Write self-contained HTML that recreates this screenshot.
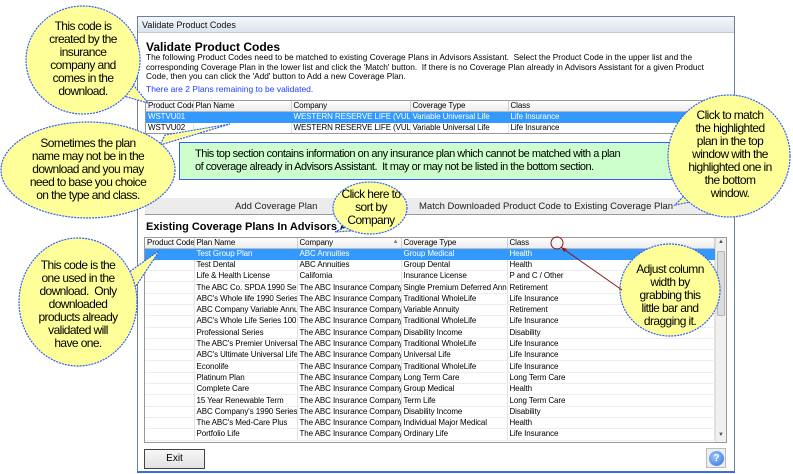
<!DOCTYPE html>
<html><head><meta charset="utf-8"><style>
*{margin:0;padding:0;box-sizing:border-box}
body{width:793px;height:474px;background:#fff;position:relative;overflow:hidden;font-family:"Liberation Sans",sans-serif;color:#000}
.a{position:absolute}
.win{left:137px;top:16px;width:598px;height:457px;border:1px solid #6f7f95;border-bottom:2px solid #3a6fd6;background:#fff}
.title{left:0;top:0;width:596px;height:16px;background:linear-gradient(#f4f7fb,#dbe4ef);border-bottom:1px solid #c0c8d4;font-size:9px;line-height:16px;padding-left:4px;color:#111}
.t{font-size:8.5px;white-space:nowrap;line-height:11px}
table{border-collapse:collapse;table-layout:fixed;font-size:8px;letter-spacing:-0.1px}
td{height:11.3px;line-height:10px;padding:0 2px;white-space:nowrap;overflow:hidden;border-right:1px solid #e3e3e3;border-bottom:1px solid #eee}
th{font-weight:normal;text-align:left;padding:0 2px;height:10px;line-height:9px;background:linear-gradient(#fff,#ececec);border-right:1px solid #cfcfcf;border-bottom:1px solid #bbb;white-space:nowrap;overflow:hidden}
tr.sel td{background:#3399ff;color:#fff;border-color:#3399ff}
.c{font-size:12px;line-height:13px;text-align:center;position:absolute;letter-spacing:-0.6px}
</style></head><body>
<div class="a win">
 <div class="a title">Validate Product Codes</div>
</div>
<div class="a" style="left:146px;top:40px;font-size:12px;font-weight:bold">Validate Product Codes</div>
<div class="a t" style="left:146px;top:53px;line-height:9.5px;font-size:8.3px">The following Product Codes need to be matched to existing Coverage Plans in Advisors Assistant.&nbsp; Select the Product Code in the upper list and the<br>corresponding Coverage Plan in the lower list and click the 'Match' button.&nbsp; If there is no Coverage Plan already in Advisors Assistant for a given Product<br>Code, then you can click the 'Add' button to Add a new Coverage Plan.</div>
<div class="a t" style="left:146px;top:84px;color:#1f3fff">There are 2 Plans remaining to be validated.</div>
<div class="a" style="left:145px;top:100px;width:582px;height:34px;border:1px solid #999;overflow:hidden">
<table style="width:580px"><colgroup><col style="width:47px"><col style="width:98px"><col style="width:119px"><col style="width:98px"><col></colgroup>
<tr><th>Product Code</th><th>Plan Name</th><th>Company</th><th>Coverage Type</th><th>Class</th></tr>
<tr class="sel"><td>WSTVU01</td><td></td><td>WESTERN RESERVE LIFE (VUL)</td><td>Variable Universal Life</td><td>Life Insurance</td></tr>
<tr><td>WSTVU02</td><td></td><td>WESTERN RESERVE LIFE (VUL)</td><td>Variable Universal Life</td><td>Life Insurance</td></tr>
</table></div>
<div class="a" style="left:179px;top:142px;width:520px;height:38px;background:#ccffcc;border:1px solid #2f5fff;font-size:11px;line-height:13px;padding:5px 0 0 15px;white-space:nowrap;letter-spacing:-0.5px">This top section contains information on any insurance plan which cannot be matched with a plan<br>of coverage already in Advisors Assistant.&nbsp; It may or may not be listed in the bottom section.</div>
<div class="a" style="left:145px;top:198px;width:583px;height:17px;background:#ececec;border-bottom:1px solid #999"></div>
<div class="a" style="left:235px;top:201px;font-size:9.5px;color:#222">Add Coverage Plan</div>
<div class="a" style="left:419px;top:201px;font-size:9.5px;color:#222;white-space:nowrap">Match Downloaded Product Code to Existing Coverage Plan</div>
<div class="a" style="left:146px;top:221px;font-size:11px;font-weight:bold;white-space:nowrap">Existing Coverage Plans In Advisors Assistant</div>
<div class="a" style="left:144px;top:237px;width:583px;height:206px;border:1px solid #999;overflow:hidden">
<table style="width:570px"><colgroup><col style="width:49px"><col style="width:103px"><col style="width:104px"><col style="width:106px"><col></colgroup>
<tr><th>Product Code</th><th>Plan Name</th><th>Company <span style="float:right;font-size:6px;color:#777">▲</span></th><th>Coverage Type</th><th>Class</th></tr>
<tr class="sel"><td></td><td>Test Group Plan</td><td>ABC Annuities</td><td>Group Medical</td><td>Health</td></tr>
<tr><td></td><td>Test Dental</td><td>ABC Annuities</td><td>Group Dental</td><td>Health</td></tr>
<tr><td></td><td>Life &amp; Health License</td><td>California</td><td>Insurance License</td><td>P and C / Other</td></tr>
<tr><td></td><td>The ABC Co. SPDA 1990 Series</td><td>The ABC Insurance Company</td><td>Single Premium Deferred Annuity</td><td>Retirement</td></tr>
<tr><td></td><td>ABC's Whole life 1990 Series</td><td>The ABC Insurance Company</td><td>Traditional WholeLife</td><td>Life Insurance</td></tr>
<tr><td></td><td>ABC Company Variable Annuity</td><td>The ABC Insurance Company</td><td>Variable Annuity</td><td>Retirement</td></tr>
<tr><td></td><td>ABC's Whole Life Series 100</td><td>The ABC Insurance Company</td><td>Traditional WholeLife</td><td>Life Insurance</td></tr>
<tr><td></td><td>Professional Series</td><td>The ABC Insurance Company</td><td>Disability Income</td><td>Disability</td></tr>
<tr><td></td><td>The ABC's Premier Universal Life</td><td>The ABC Insurance Company</td><td>Traditional WholeLife</td><td>Life Insurance</td></tr>
<tr><td></td><td>ABC's Ultimate Universal Life</td><td>The ABC Insurance Company</td><td>Universal Life</td><td>Life Insurance</td></tr>
<tr><td></td><td>Econolife</td><td>The ABC Insurance Company</td><td>Traditional WholeLife</td><td>Life Insurance</td></tr>
<tr><td></td><td>Platinum Plan</td><td>The ABC Insurance Company</td><td>Long Term Care</td><td>Long Term Care</td></tr>
<tr><td></td><td>Complete Care</td><td>The ABC Insurance Company</td><td>Group Medical</td><td>Health</td></tr>
<tr><td></td><td>15 Year Renewable Term</td><td>The ABC Insurance Company</td><td>Term Life</td><td>Long Term Care</td></tr>
<tr><td></td><td>ABC Company's 1990 Series Disability</td><td>The ABC Insurance Company</td><td>Disability Income</td><td>Disability</td></tr>
<tr><td></td><td>The ABC's Med-Care Plus</td><td>The ABC Insurance Company</td><td>Individual Major Medical</td><td>Health</td></tr>
<tr><td></td><td>Portfolio Life</td><td>The ABC Insurance Company</td><td>Ordinary Life</td><td>Life Insurance</td></tr>
</table>
<div class="a" style="left:570px;top:0;width:11px;height:204px;background:#f0f0f0;border-left:1px solid #ddd"><div class="a" style="left:1px;top:13px;width:8px;height:65px;background:#dcdcdc;border:1px solid #b5b5b5;border-radius:2px"></div><div class="a" style="left:2px;top:1px;font-size:6px;color:#555">▲</div><div class="a" style="left:2px;top:194px;font-size:6px;color:#555">▼</div></div>
</div>
<div class="a" style="left:144px;top:449px;width:61px;height:20px;border:1px solid #444;background:linear-gradient(#f7f7f7,#e2e2e2);font-size:10px;text-align:center;line-height:18px">Exit</div>
<div class="a" style="left:706px;top:448px;width:20px;height:20px;border:1px solid #bbb;background:#eee"><div class="a" style="left:2px;top:2px;width:15px;height:15px;border-radius:50%;background:radial-gradient(circle at 40% 35%,#9cc8ff,#2a6fd8);color:#fff;font-size:10px;font-weight:bold;text-align:center;line-height:15px">?</div></div>

<svg class="a" style="left:0;top:0" width="793" height="474">
<g fill="#ffff99" stroke="#2f5fff" stroke-width="1.2" stroke-dasharray="2 1">
<path d="M120,95 L148,103 L131,82 Z"/>
<ellipse cx="83" cy="60" rx="57" ry="54"/>
<path d="M160,145 L230,124 L165,135 Z"/>
<ellipse cx="88" cy="170" rx="87" ry="48"/>
<path d="M125,275 L160,250 L132,292 Z"/>
<ellipse cx="78" cy="302" rx="59" ry="64"/>
<path d="M690,190 L675,205 L700,200 Z"/>
<ellipse cx="729" cy="156" rx="61" ry="61"/>
<path d="M350,225 L335,232 L365,230 Z"/>
<ellipse cx="370" cy="208" rx="37" ry="26"/>
<ellipse cx="670" cy="290" rx="50" ry="46"/>
</g>
<line x1="622" y1="290" x2="562" y2="248" stroke="#8b1a1a" stroke-width="1"/>
<path d="M561,247 L567,249 L564,252 Z" fill="#8b1a1a"/>
<circle cx="557" cy="243" r="6" fill="none" stroke="#8b1a1a" stroke-width="1"/>
</svg>
<div class="c" style="left:30px;top:20px;width:106px">This code is<br>created by the<br>insurance<br>company and<br>comes in the<br>download.</div>
<div class="c" style="left:10px;top:137px;width:156px">Sometimes the plan<br>name may not be in the<br>download and you may<br>need to base you choice<br>on the type and class.</div>
<div class="c" style="left:24px;top:259px;width:108px">This code is the<br>one used in the<br>download.&nbsp; Only<br>downloaded<br>products already<br>validated will<br>have one.</div>
<div class="c" style="left:672px;top:109px;width:116px">Click to match<br>the highlighted<br>plan in the top<br>window with the<br>highlighted one in<br>the bottom<br>window.</div>
<div class="c" style="left:334px;top:188px;width:74px">Click here to<br>sort by<br>Company</div>
<div class="c" style="left:622px;top:263px;width:96px">Adjust column<br>width by<br>grabbing this<br>little bar and<br>dragging it.</div>
</body></html>
